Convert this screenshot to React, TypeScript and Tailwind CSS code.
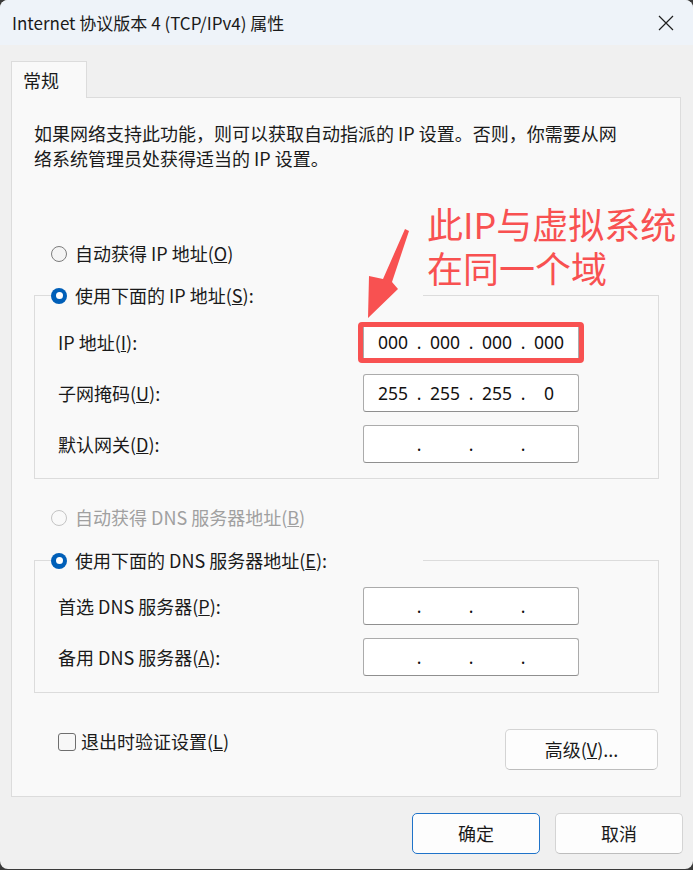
import React from "react";

const font = { fontFamily: "'Noto Sans CJK SC', 'Noto Sans', sans-serif" };

const Radio = ({ checked, disabled }: { checked?: boolean; disabled?: boolean }) =>
  checked ? (
    <span className="flex h-[16px] w-[16px] shrink-0 items-center justify-center rounded-full bg-[#005fb8]">
      <span className="h-[7px] w-[7px] rounded-full bg-white" />
    </span>
  ) : (
    <span
      className={
        disabled
          ? "h-[16px] w-[16px] shrink-0 rounded-full border border-[#c4c4c4] bg-[#f9f9f9]"
          : "h-[16px] w-[16px] shrink-0 rounded-full border border-[#7c7c7c] bg-[#f4f4f4]"
      }
    />
  );

const IpBox = ({ parts }: { parts: string[] }) => (
  <div
    className="flex h-[38px] w-[216px] shrink-0 items-center rounded-[3px] border border-[#ababab] border-b-[#8f8f8f] bg-white pl-[7px] text-[17.5px] text-[#111]"
    style={{ fontFamily: "'Noto Sans', sans-serif" }}
  >
    {parts.map((p, i) => (
      <React.Fragment key={i}>
        <span className="w-[44px] text-center">{p}</span>
        {i < 3 && <span className="w-[8px] text-center">.</span>}
      </React.Fragment>
    ))}
  </div>
);

const Field = ({ label, keyChar, children }: { label: string; keyChar: string; children: React.ReactNode }) => (
  <div className="flex items-center">
    <span className="w-[305px] shrink-0">
      {label}(<u>{keyChar}</u>):
    </span>
    {children}
  </div>
);

const empty = ["", "", "", ""];

export default function App() {
  return (
    <div className="h-[870px] w-[693px] overflow-hidden bg-[#3a3a3a]" style={font}>
      <div className="relative flex h-[869px] w-[693px] flex-col overflow-hidden rounded-[8px] bg-[#f0f0f0] text-[18px] text-[#1a1a1a]">
        {/* title bar */}
        <div className="flex h-[45px] shrink-0 items-center justify-between bg-[#eef3f9] pl-[12px] pr-[19px]">
          <span className="text-[17px] text-[#1a1a1a]">Internet 协议版本 4 (TCP/IPv4) 属性</span>
          <svg width="16" height="16" viewBox="0 0 16 16" fill="none" stroke="#1f1f1f" strokeWidth="1.2">
            <path d="M1 1 L15 15 M15 1 L1 15" />
          </svg>
        </div>

        <div className="flex flex-col px-[11px] pt-[16px]">
          {/* tab */}
          <div className="relative z-10 -mb-px flex h-[37px] w-[76px] items-center border border-b-0 border-[#dcdcdc] bg-[#f9f9f9] pl-[11px] text-[18px]">
            常规
          </div>
          {/* panel */}
          <div className="flex h-[700px] w-[670px] flex-col border border-[#dcdcdc] bg-[#f9f9f9] pl-[22px] pr-[21px] pt-[23px]">
            <p className="leading-[25px]">
              如果网络支持此功能，则可以获取自动指派的 IP 设置。否则，你需要从网
              <br />
              络系统管理员处获得适当的 IP 设置。
            </p>

            <div className="ml-[17px] mt-[70px] flex h-[25px] items-center gap-[8px]">
              <Radio />
              <span>
                自动获得 IP 地址(<u>O</u>)
              </span>
            </div>

            <fieldset className="mt-[17px] border border-[#dcdcdc] pb-[15px] pl-[23px] pt-[15px]">
              <legend className="-ml-[7px] flex h-[25px] w-[372px] items-center gap-[8px] bg-[#f9f9f9]">
                <Radio checked />
                <span>
                  使用下面的 IP 地址(<u>S</u>):
                </span>
              </legend>
              <div className="flex flex-col gap-[13px]">
                <Field label="IP 地址" keyChar="I">
                  <div className="relative">
                    <IpBox parts={["000", "000", "000", "000"]} />
                    <div className="pointer-events-none absolute -bottom-[2px] -left-[5px] -right-[5px] -top-[1px] rounded-[4px] border-[5px] border-[#f85151]" />
                  </div>
                </Field>
                <Field label="子网掩码" keyChar="U">
                  <IpBox parts={["255", "255", "255", "0"]} />
                </Field>
                <Field label="默认网关" keyChar="D">
                  <IpBox parts={empty} />
                </Field>
              </div>
            </fieldset>

            <div className="ml-[17px] mt-[26px] flex h-[25px] items-center gap-[8px] text-[#a0a0a0]">
              <Radio disabled />
              <span>
                自动获得 DNS 服务器地址(<u>B</u>)
              </span>
            </div>

            <fieldset className="mt-[18px] border border-[#dcdcdc] pb-[16px] pl-[23px] pt-[14px]">
              <legend className="-ml-[7px] flex h-[25px] w-[372px] items-center gap-[8px] bg-[#f9f9f9]">
                <Radio checked />
                <span>
                  使用下面的 DNS 服务器地址(<u>E</u>):
                </span>
              </legend>
              <div className="flex flex-col gap-[13px]">
                <Field label="首选 DNS 服务器" keyChar="P">
                  <IpBox parts={empty} />
                </Field>
                <Field label="备用 DNS 服务器" keyChar="A">
                  <IpBox parts={empty} />
                </Field>
              </div>
            </fieldset>

            <div className="mt-[36px] flex items-start justify-between pl-[24px] pr-[1px]">
              <label className="flex h-[25px] items-center gap-[5px]">
                <span className="h-[18px] w-[18px] rounded-[3px] border border-[#6e6e6e] bg-[#f7f7f7]" />
                <span>
                  退出时验证设置(<u>L</u>)
                </span>
              </label>
              <button className="flex h-[41px] w-[153px] items-center justify-center rounded-[5px] border border-[#d4d4d4] border-b-[#bdbdbd] bg-[#fdfdfd] text-[18px]">
                高级(<u>V</u>)...
              </button>
            </div>
          </div>

          {/* dialog buttons */}
          <div className="-mr-[1px] mt-[16px] flex justify-end gap-[15px]">
            <button className="flex h-[41px] w-[128px] items-center justify-center rounded-[5px] border-[1.5px] border-[#1f73c9] bg-[#fdfdfd] text-[18px]">
              确定
            </button>
            <button className="flex h-[41px] w-[128px] items-center justify-center rounded-[5px] border border-[#d4d4d4] border-b-[#bdbdbd] bg-[#fdfdfd] text-[18px]">
              取消
            </button>
          </div>
        </div>

        {/* annotation */}
        <div className="pointer-events-none absolute left-[427px] top-[201px] text-[36px] leading-[44px] text-[#f85151]">
          此IP与虚拟系统
          <br />
          在同一个域
        </div>
        <svg className="pointer-events-none absolute left-[360px] top-[225px]" width="55" height="100" viewBox="0 0 55 100">
          <polygon points="45,4 49,6 32,57 38,64 8,93 9,51 23,54" fill="#f85151" />
        </svg>
      </div>
    </div>
  );
}
